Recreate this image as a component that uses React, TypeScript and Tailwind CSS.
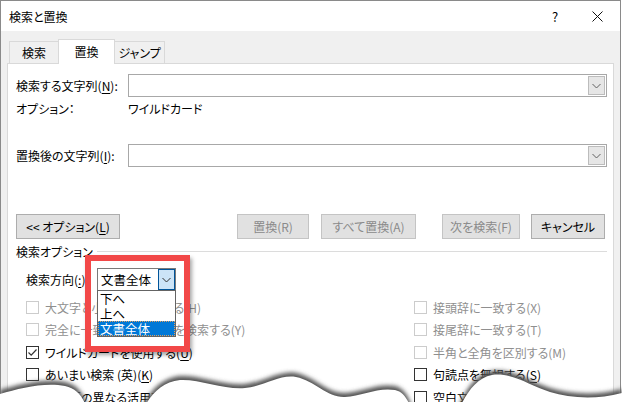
import React from 'react';

type Acc = { pre: string; u?: string; post?: string };

const Label: React.FC<Acc> = ({ pre, u, post }) => (
  <span>
    {pre}
    {u && <span className="underline underline-offset-2">{u}</span>}
    {post}
  </span>
);

const Chevron: React.FC<{ color?: string }> = ({ color = '#606060' }) => (
  <svg width="9" height="6" viewBox="0 0 9 6">
    <path d="M0.5 1 L4.5 5 L8.5 1" fill="none" stroke={color} strokeWidth="1" />
  </svg>
);

const Combo: React.FC = () => (
  <div className="flex-1 h-[23px] border border-[#a8a8a8] bg-white flex justify-end items-stretch p-px">
    <div className="w-[17px] bg-[#e6e6e6] border border-[#bcbcbc] flex items-center justify-center">
      <Chevron />
    </div>
  </div>
);

const Btn: React.FC<{ w: string; disabled?: boolean; children: React.ReactNode }> = ({ w, disabled, children }) => (
  <div
    className={`${w} h-[25px] flex items-center justify-center bg-[#e1e1e1] border ${
      disabled ? 'border-[#c4c4c4] text-[#8a8a8a]' : 'border-[#adadad] text-black'
    }`}
  >
    {children}
  </div>
);

const Check: React.FC<{ label: Acc; disabled?: boolean; checked?: boolean }> = ({ label, disabled, checked }) => (
  <div className="h-[22.5px] flex items-center gap-[6px] whitespace-nowrap">
    <div
      className={`w-[13px] h-[13px] border bg-white flex items-center justify-center shrink-0 ${
        disabled ? 'border-[#cccccc]' : 'border-[#333333]'
      }`}
    >
      {checked && (
        <svg width="11" height="11" viewBox="0 0 11 11">
          <path d="M1.5 5.5 L4.2 8.2 L9.5 2.5" fill="none" stroke="#333" strokeWidth="1.2" />
        </svg>
      )}
    </div>
    <span className={disabled ? 'text-[#8f8f8f]' : 'text-black'}>
      <Label pre={label.pre} u={label.u} post={label.post} />
    </span>
  </div>
);

const tear =
  'M0 392 C20 386 45 380 65 384 C78 387 84 396 88 410 L142 410 C148 396 160 380 180 378 C200 377 225 388 245 386 C265 384 280 372 296 375 C315 379 328 396 345 395 C362 394 378 385 395 388 C405 390 410 402 412 410 L458 410 C464 395 475 376 492 373 C512 370 530 384 550 390 C570 396 595 398 622 391 L622 410 L0 410 Z';

const App: React.FC = () => {
  return (
    <div className="w-[622px] h-[402px] relative overflow-hidden bg-white text-[12px] leading-[15px] text-black font-['Noto_Sans_CJK_JP','Noto_Sans',sans-serif] [font-feature-settings:'palt']">
      <div className="w-[621px] h-[410px] border-l border-t border-r border-[#8a8a8a] bg-[#f0f0f0] flex flex-col">
        {/* title bar */}
        <div className="h-[30px] bg-white flex items-center pl-[8px] shrink-0">
          <span>検索と置換</span>
          <div className="ml-auto w-[40px] flex justify-center text-[13px]">?</div>
          <div className="w-[45px] flex justify-center">
            <svg width="11" height="11" viewBox="0 0 11 11">
              <path d="M0.5 0.5 L10.5 10.5 M10.5 0.5 L0.5 10.5" stroke="#111" strokeWidth="1" />
            </svg>
          </div>
        </div>

        {/* tabs + panel */}
        <div className="pt-[8px] px-[6px] flex flex-col">
          <div className="flex items-end h-[24px] pl-[2px]">
            <div className="w-[50px] h-[22px] border border-b-0 border-[#d9d9d9] bg-[#f0f0f0] flex items-center justify-center">
              検索
            </div>
            <div className="w-[57px] h-[25px] -mb-px -ml-px border border-b-0 border-[#d9d9d9] bg-white relative z-10 flex items-center justify-center pb-[2px]">
              置換
            </div>
            <div className="w-[51px] h-[22px] -ml-px border border-b-0 border-[#d9d9d9] bg-[#f0f0f0] flex items-center justify-center">
              ジャンプ
            </div>
          </div>

          <div className="border border-[#d9d9d9] bg-white pl-[8px] pr-[6px] pt-[10px] h-[360px] flex flex-col">
            <div className="flex items-center h-[23px]">
              <div className="w-[112px]">
                <Label pre="検索する文字列(" u="N" post="):" />
              </div>
              <Combo />
            </div>
            <div className="flex items-center h-[22px]">
              <div className="w-[112px]">オプション：</div>
              <div>ワイルドカード</div>
            </div>

            <div className="flex items-center h-[23px] mt-[25px]">
              <div className="w-[112px]">
                <Label pre="置換後の文字列(" u="I" post="):" />
              </div>
              <Combo />
            </div>

            <div className="flex items-center mt-[47px]">
              <Btn w="w-[104px]">
                <Label pre="<< オプション(" u="L" post=")" />
              </Btn>
              <div className="ml-[117px]">
                <Btn w="w-[72px]" disabled>
                  置換(R)
                </Btn>
              </div>
              <div className="ml-[12px]">
                <Btn w="w-[95px]" disabled>
                  すべて置換(A)
                </Btn>
              </div>
              <div className="ml-[26px]">
                <Btn w="w-[78px]" disabled>
                  次を検索(F)
                </Btn>
              </div>
              <div className="ml-[11px]">
                <Btn w="w-[74px]">キャンセル</Btn>
              </div>
            </div>

            <div className="flex items-center h-[20px] mt-[2px] gap-[4px]">
              <span>検索オプション</span>
              <div className="flex-1 h-px bg-[#dcdcdc]" />
            </div>

            <div className="flex items-center h-[23px] mt-[7px] ml-[10px]">
              <div className="w-[71px] whitespace-nowrap">
                <Label pre="検索方向(" u=":" post=")" />
              </div>
              <div className="relative w-[79px] h-[23px] border border-[#7a7a7a] bg-white flex items-center">
                <span className="pl-[3px] text-[12.5px]">文書全体</span>
                <div className="ml-auto w-[17px] h-full bg-[#cce4f7] border border-[#005499] flex items-center justify-center">
                  <Chevron color="#333" />
                </div>
                <div className="absolute top-full -left-px w-[79px] border border-[#646464] bg-white z-20 flex flex-col">
                  <div className="h-[15px] flex items-center pl-[2px] text-[12.5px]">下へ</div>
                  <div className="h-[15px] flex items-center pl-[2px] text-[12.5px]">上へ</div>
                  <div className="h-[15px] flex items-center pl-[2px] text-[12.5px] bg-[#0078d7] text-white outline outline-1 outline-dotted outline-[#e0a060] -outline-offset-1">
                    文書全体
                  </div>
                </div>
              </div>
            </div>

            <div className="grid grid-cols-[388px_1fr] mt-[5px] ml-[10px]">
              <Check disabled label={{ pre: '大文字と小文字を区別する(H)' }} />
              <Check disabled label={{ pre: '接頭辞に一致する(X)' }} />
              <Check disabled label={{ pre: '完全に一致する単語だけを検索する(Y)' }} />
              <Check disabled label={{ pre: '接尾辞に一致する(T)' }} />
              <Check checked label={{ pre: 'ワイルドカードを使用する(', u: 'U', post: ')' }} />
              <Check disabled label={{ pre: '半角と全角を区別する(M)' }} />
              <Check label={{ pre: 'あいまい検索 (英)(', u: 'K', post: ')' }} />
              <Check label={{ pre: '句読点を無視する(', u: 'S', post: ')' }} />
              <Check label={{ pre: '英単語の異なる活用形も検索する (英)(', u: 'W', post: ')' }} />
              <Check label={{ pre: '空白文字を無視する(', u: 'W', post: ')' }} />
            </div>
          </div>
        </div>
      </div>

      {/* red highlight annotation */}
      <div className="absolute left-[85px] top-[255px] w-[105px] h-[97px] border-[6px] border-[#f24848] shadow-[2px_3px_4px_rgba(0,0,0,0.35)] z-30" />

      {/* torn paper edge */}
      <svg className="absolute left-0 bottom-0 z-40" width="622" height="46" viewBox="0 356 622 46">
        <defs>
          <filter id="blur" x="-10%" y="-50%" width="120%" height="200%">
            <feGaussianBlur stdDeviation="2" />
          </filter>
        </defs>
        <path d={tear} fill="#555" filter="url(#blur)" transform="translate(0 -2)" />
        <path d={tear} fill="#fff" transform="translate(0 2)" />
      </svg>
    </div>
  );
};

export default App;
